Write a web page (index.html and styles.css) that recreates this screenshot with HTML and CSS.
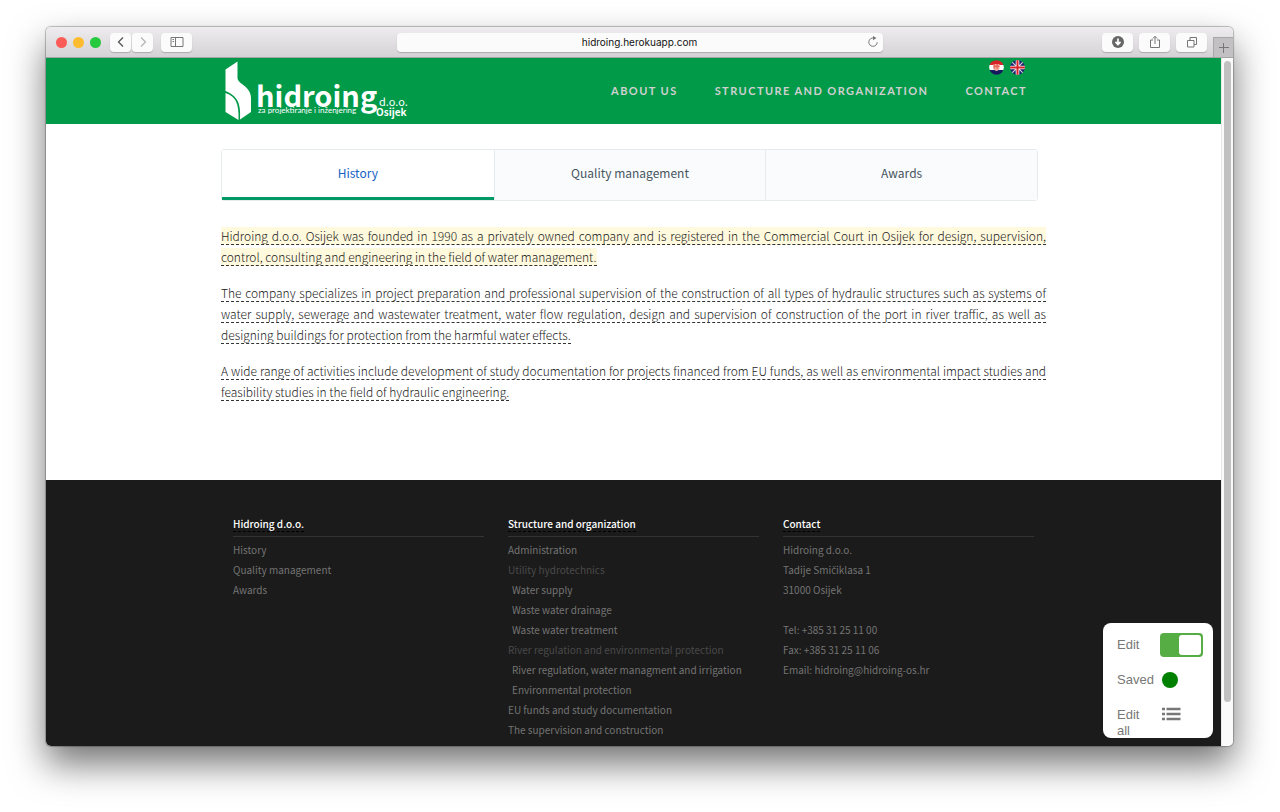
FILE: index.html
```html
<!DOCTYPE html>
<html lang="en">
<head>
<meta charset="utf-8">
<meta name="viewport" content="width=device-width, initial-scale=1">
<title>hidroing.herokuapp.com</title>
<link rel="stylesheet" href="styles.css">
</head>
<body>
<div class="window">
  <div class="toolbar">
    <div class="tool-group">
      <div class="lights"><span class="light red"></span><span class="light yellow"></span><span class="light green"></span></div>
      <div class="history-buttons">
        <button class="tool narrow" aria-label="Back"><svg width="12" height="12" viewBox="0 0 12 12"><path d="M8 1.500 3.500 6 8 10.500" fill="none" stroke="#555" stroke-width="1.300"/></svg></button>
        <button class="tool narrow" aria-label="Forward"><svg width="12" height="12" viewBox="0 0 12 12"><path d="M4 1.500 8.500 6 4 10.500" fill="none" stroke="#b5b5b5" stroke-width="1.300"/></svg></button>
      </div>
      <button class="tool" aria-label="Sidebar"><svg width="14" height="12" viewBox="0 0 14 12"><path d="M1 1.500h12v9H1zM5.500 1.500v9M2.500 3.500h1.500M2.500 5.500h1.500" fill="none" stroke="#777"/></svg></button>
    </div>
    <div class="address">
      <input class="url" type="text" value="hidroing.herokuapp.com" aria-label="Address">
      <button class="reload" aria-label="Reload"><svg width="12" height="12" viewBox="0 0 12 12"><path d="M6.800 2A4.200 4.200 0 1 0 10.200 6.200" fill="none" stroke="#777"/><path d="M6 0 9.500 2 6 4.200z" fill="#777"/></svg></button>
    </div>
    <div class="tool-group end">
      <button class="tool" aria-label="Downloads"><svg width="12" height="12" viewBox="0 0 12 12"><circle cx="6" cy="6" r="6" fill="#666"/><path d="M6 2.500v5M3.500 5.800 6 8.500 8.500 5.800" fill="none" stroke="#fff" stroke-width="1.700"/></svg></button>
      <button class="tool" aria-label="Share"><svg width="12" height="14" viewBox="0 0 12 14"><path d="M4 5H1.500v7.500h9V5H8M6 9V1.500M3.800 3.500 6 1.300 8.200 3.500" fill="none" stroke="#777"/></svg></button>
      <button class="tool" aria-label="Tabs"><svg width="12" height="12" viewBox="0 0 12 12"><path d="M1.500 4.500h6.500v6.500H1.500zM4 4V1.500h6.500V8.500H8" fill="none" stroke="#777"/></svg></button>
    </div>
    <button class="new-tab" aria-label="New tab"><svg width="12" height="12" viewBox="0 0 12 12"><path d="M5.500 1v10M1 5.500h10" stroke="#777" fill="none"/></svg></button>
  </div>
  <div class="viewport">
    <div class="page">
      <header class="site-header">
        <div class="container header-row">
          <a class="logo" href="#" aria-label="Hidroing d.o.o. Osijek">
            <svg width="190" height="64" viewBox="0 0 190 64">
              <path d="M4.500 11.500 16.500 3.500V20c0 6 13.500 8 13.500 20v14L19 61.500C20 46 17 38 4.500 33z" fill="#fff"/>
              <path d="M4.500 35C15 38.500 18 46 17.500 62L4.500 54z" fill="#fff"/>
              <text class="logo-name" x="35" y="49">hidroing</text>
              <text class="logo-tag" x="37" y="55">za projektiranje i inženjering</text>
              <text class="logo-doo" x="158" y="48">d.o.o.</text>
              <text class="logo-city" x="155" y="58">Osijek</text>
            </svg>
          </a>
          <div class="header-end">
            <div class="languages">
              <a href="#" aria-label="Hrvatski"><svg width="15" height="15" viewBox="0 0 15 15"><defs><clipPath id="disc"><circle cx="7.500" cy="7.500" r="7.300"/></clipPath></defs><g clip-path="url(#disc)"><path d="M0 0h15v5H0z" fill="#d8232a"/><path d="M0 5h15v5H0z" fill="#fff"/><path d="M0 10h15v5H0z" fill="#15185f"/><path d="M4.500 4h6v5q-3 4-6 0z" fill="#f7a79c"/><path d="M4.500 4h1.500v1.500h1.500V4H9v1.500h1.500V7H9v1.500H7.500V7H6v1.500H4.500z" fill="#e8695c"/></g></svg></a>
              <a href="#" aria-label="English"><svg width="15" height="15" viewBox="0 0 15 15"><g clip-path="url(#disc)"><path d="M0 0h15v15H0z" fill="#1c2068"/><path d="M0 0l15 15M15 0 0 15" stroke="#d8d0e0" stroke-width="1.200"/><path d="M7.500 0v15M0 7.500h15" stroke="#fff" stroke-width="3.600"/><path d="M7.500 0v15M0 7.500h15" stroke="#d8232a" stroke-width="2"/></g></svg></a>
            </div>
            <nav class="main-nav"><a href="#">ABOUT US</a><a href="#">STRUCTURE AND ORGANIZATION</a><a href="#">CONTACT</a></nav>
          </div>
        </div>
      </header>
      <main class="container content">
        <div class="tabs" role="tablist">
          <button class="tab active" role="tab" aria-selected="true">History</button>
          <button class="tab" role="tab">Quality management</button>
          <button class="tab" role="tab">Awards</button>
        </div>
        <div class="article">
          <p><span class="editable current">Hidroing d.o.o. Osijek was founded in 1990 as a privately owned company and is registered in the Commercial Court in Osijek for design, supervision, control, consulting and engineering in the field of water management.</span></p>
          <p><span class="editable">The company specializes in project preparation and professional supervision of the construction of all types of hydraulic structures such as systems of water supply, sewerage and wastewater treatment, water flow regulation, design and supervision of construction of the port in river traffic, as well as designing buildings for protection from the harmful water effects.</span></p>
          <p><span class="editable">A wide range of activities include development of study documentation for projects financed from EU funds, as well as environmental impact studies and feasibility studies in the field of hydraulic engineering.</span></p>
        </div>
      </main>
      <footer class="site-footer">
        <div class="container footer-grid">
          <section class="footer-col">
            <h2><span>Hidroing d.o.o.</span></h2>
            <ul><li><a href="#">History</a></li><li><a href="#">Quality management</a></li><li><a href="#">Awards</a></li></ul>
          </section>
          <section class="footer-col">
            <h2><span>Structure and organization</span></h2>
            <ul>
              <li><a href="#">Administration</a></li>
              <li class="group">Utility hydrotechnics</li>
              <li class="sub"><a href="#">Water supply</a></li>
              <li class="sub"><a href="#">Waste water drainage</a></li>
              <li class="sub"><a href="#">Waste water treatment</a></li>
              <li class="group">River regulation and environmental protection</li>
              <li class="sub"><a href="#">River regulation, water managment and irrigation</a></li>
              <li class="sub"><a href="#">Environmental protection</a></li>
              <li><a href="#">EU funds and study documentation</a></li>
              <li><a href="#">The supervision and construction</a></li>
            </ul>
          </section>
          <section class="footer-col">
            <h2><span>Contact</span></h2>
            <ul><li>Hidroing d.o.o.</li><li>Tadije Smi<span class="caron">č</span>iklasa 1</li><li>31000 Osijek</li><li class="phone">Tel: +385 31 25 11 00</li><li>Fax: +385 31 25 11 06</li><li>Email: hidroing@hidroing-os.hr</li></ul>
          </section>
        </div>
      </footer>
    </div>
    <div class="scrollbar"><div class="thumb"></div></div>
    <aside class="editor">
      <label for="edit">Edit</label><input class="switch" id="edit" type="checkbox" role="switch" checked>
      <span>Saved</span><span class="status"></span>
      <span class="edit-all">Edit all</span>
      <button class="list" aria-label="Edit all"><svg width="20" height="14" viewBox="0 0 20 14"><path d="M0 2h3M4.500 2h14M0 7h3M4.500 7h14M0 12h3M4.500 12h14" stroke="#777" stroke-width="2.400"/></svg></button>
    </aside>
  </div>
</div>
</body>
</html>
```
FILE: styles.css
```css
* { box-sizing: border-box; }
body {
  margin: 0;
  padding: 27px 47px 66px 46px;
  background: #fff;
  font-family: "Noto Sans CJK SC", "Open Sans", sans-serif;
  overflow: hidden;
}
a { color: inherit; text-decoration: none; }
button, input { font: inherit; }
svg { display: block; }

.window {
  border-radius: 5px;
  overflow: hidden;
  box-shadow: 0 0 1px 1px rgba(0, 0, 0, 0.25), 0 18px 36px rgba(0, 0, 0, 0.55);
}
.toolbar {
  position: relative;
  display: flex;
  align-items: center;
  justify-content: space-between;
  height: 31px;
  padding: 0 10px;
  background: linear-gradient(#eeecee, #d4d2d4);
  border-bottom: 1px solid #a5a3a5;
}
.tool-group { display: flex; align-items: center; flex: 1; gap: 8px; }
.tool-group.end { justify-content: flex-end; gap: 6px; padding-right: 16px; }
.lights { display: flex; gap: 6px; margin-right: 1px; }
.light { width: 11px; height: 11px; border-radius: 50%; }
.red { background: #fc5b57; }
.yellow { background: #fdbc2f; }
.green { background: #27c93f; }
.history-buttons { display: flex; gap: 1px; }
.tool {
  display: grid;
  place-items: center;
  width: 31px;
  height: 19px;
  padding: 0;
  border: 0;
  border-radius: 4px;
  background: #fbfbfb;
  box-shadow: 0 1px 1px rgba(0, 0, 0, 0.2);
}
.tool.narrow { width: 21px; }
.address {
  display: flex;
  width: 42%;
  max-width: 486px;
  height: 19px;
  margin-left: 16px;
  border-radius: 4px;
  background: #fbfbfb;
  box-shadow: 0 1px 1px rgba(0, 0, 0, 0.2);
}
.url {
  flex: 1;
  min-width: 0;
  padding: 0 0 0 20px;
  border: 0;
  background: none;
  color: #111;
  font-family: Inter, sans-serif;
  font-size: 10px;
  text-align: center;
}
.reload { width: 20px; padding: 0 4px; border: 0; background: none; }
.new-tab {
  position: absolute;
  right: 0;
  bottom: 0;
  display: grid;
  place-items: center;
  width: 20px;
  height: 20px;
  padding: 0;
  border: 1px solid #a9a7a9;
  border-width: 1px 0 0 1px;
  background: #c2c0c2;
}

.viewport { position: relative; display: flex; }
.page { flex: 1; min-width: 0; background: #fff; }
.scrollbar { width: 12px; padding: 3px 2px; background: #fafafa; border-left: 1px solid #e8e8e8; }
.thumb { height: 94%; border-radius: 4px; background: #c1c1c1; }
.container { max-width: 825px; margin: 0 auto; }

.site-header { background: #009a49; }
.header-row { display: flex; justify-content: space-between; height: 66px; }
.header-end { display: flex; flex-direction: column; align-items: flex-end; padding: 2px 19px 0 0; }
.languages { display: flex; gap: 6px; padding-right: 2px; }
.main-nav {
  display: flex;
  gap: 37px;
  margin-top: 8px;
  color: #d0d0d0;
  font: 700 11px/16px Lato, sans-serif;
  letter-spacing: 0.13em;
}
.logo text { fill: #fff; }
.logo-name { font-size: 29px; font-weight: 700; }
.logo-tag { font-family: Lato, sans-serif; font-size: 8px; }
.logo-doo { font-size: 11px; }
.logo-city { font-size: 10px; font-weight: 700; }

.content { min-height: 356px; padding-top: 25px; }
.tabs {
  display: grid;
  grid-template-columns: repeat(3, 1fr);
  height: 52px;
  margin-right: 8px;
  border: 1px solid #e6ebee;
  border-radius: 3px;
}
.tab {
  padding: 0 0 5px;
  border: 0;
  border-left: 1px solid #e6ebee;
  background: #fafbfd;
  color: #46555e;
  font-size: 12px;
  font-weight: 400;
}
.tab.active {
  border-left: 0;
  box-shadow: inset 0 -3px #009966;
  background: #fff;
  color: #1462c4;
}
.article { padding-top: 24px; color: #222; font-size: 12px; font-weight: 300; line-height: 21px; text-align: justify; }
.article p { margin: 0 0 15px; }
.editable { border-bottom: 1px dashed #333; }
.current { background: #fff9dd; }

.site-footer { background: #1b1b1b; color: #747474; }
.footer-grid { display: grid; grid-template-columns: repeat(3, 1fr); padding: 34px 0 6px; }
.footer-col { padding: 0 12px; font-size: 10px; font-weight: 400; line-height: 20px; }
.footer-col h2 { margin: 0 0 3px; padding-bottom: 2px; border-bottom: 1px solid #333; color: #fff; font-size: 10px; font-weight: 500; line-height: 20px; }
.footer-col h2 span { border-bottom: 1px dashed #000; }
.footer-col ul { margin: 0; padding: 0; list-style: none; }
.caron { font-family: "Open Sans", sans-serif; line-height: 1; }
.group { color: #4a4a4a; }
.sub { padding-left: 4px; }
.phone { margin-top: 20px; }

.editor {
  position: absolute;
  right: 20px;
  bottom: 8px;
  display: grid;
  grid-template-columns: 38px 1fr;
  grid-template-rows: 24px 16px 40px;
  column-gap: 5px;
  row-gap: 15px;
  align-items: center;
  width: 110px;
  height: 115px;
  padding: 10px 9px 0 14px;
  border-radius: 8px;
  background: #fff;
  color: #777;
  font: 13px/16px "Liberation Sans", sans-serif;
  overflow: hidden;
}
.switch {
  appearance: none;
  width: 43px;
  height: 24px;
  margin: 0;
  padding: 2px;
  border-radius: 4px;
  background: #55ad43;
}
.switch::before { content: ""; display: block; width: 22px; height: 20px; margin-left: auto; border-radius: 3px; background: #fff; }
.status { width: 16px; height: 16px; margin-left: 2px; border-radius: 50%; background: #008000; }
.edit-all { width: 26px; }
.list { align-self: start; margin: 4px 0 0 2px; padding: 0; border: 0; background: none; }
```
